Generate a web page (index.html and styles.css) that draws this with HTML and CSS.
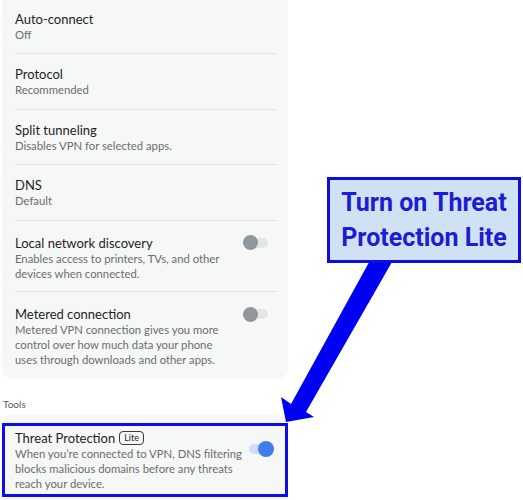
FILE: index.html
```html
<!DOCTYPE html>
<html>
<head>
<meta charset="utf-8">
<link rel="stylesheet" href="styles.css">
</head>
<body>
<div class="page">
  <div class="card card-top">
    <div class="row row-first">
      <div class="text">
        <div class="title">Auto-connect</div>
        <div class="sub">Off</div>
      </div>
    </div>
    <div class="row">
      <div class="text">
        <div class="title">Protocol</div>
        <div class="sub">Recommended</div>
      </div>
    </div>
    <div class="row">
      <div class="text">
        <div class="title">Split tunneling</div>
        <div class="sub">Disables VPN for selected apps.</div>
      </div>
    </div>
    <div class="row">
      <div class="text">
        <div class="title">DNS</div>
        <div class="sub">Default</div>
      </div>
    </div>
    <div class="row row-toggle">
      <div class="text">
        <div class="title">Local network discovery</div>
        <div class="sub">Enables access to printers, TVs, and other<br>devices when connected.</div>
      </div>
      <div class="switch switch-off"><span class="knob"></span></div>
    </div>
    <div class="row row-toggle row-last">
      <div class="text">
        <div class="title">Metered connection</div>
        <div class="sub">Metered VPN connection gives you more<br>control over how much data your phone<br>uses through downloads and other apps.</div>
      </div>
      <div class="switch switch-off"><span class="knob"></span></div>
    </div>
  </div>

  <div class="section-label">Tools</div>

  <div class="card card-tools">
    <div class="row row-threat">
      <div class="text">
        <div class="title">Threat Protection <span class="badge">Lite</span></div>
        <div class="sub">When you’re connected to VPN, DNS filtering<br>blocks malicious domains before any threats<br>reach your device.</div>
      </div>
      <div class="switch switch-on"><span class="knob"></span></div>
    </div>
    <div class="highlight"></div>
  </div>

  <svg class="arrow" width="523" height="500" viewBox="0 0 523 500" xmlns="http://www.w3.org/2000/svg">
    <polygon points="373,255 396,255 306,412 314,417 286,422 281,397 291,404" fill="#0000f2"/>
  </svg>

  <div class="callout">Turn on Threat<br>Protection Lite</div>
</div>
</body>
</html>
```

FILE: styles.css
```css
html, body {
  margin: 0;
  padding: 0;
  background: #ffffff;
}

.page {
  position: relative;
  width: 523px;
  height: 500px;
  overflow: hidden;
  font-family: Lato, "Noto Sans", sans-serif;
}

.card {
  margin-left: 2px;
  width: 286px;
  background: #f6f7f7;
}

.card-top {
  border-radius: 0 0 8px 8px;
}

.row {
  display: flex;
  align-items: flex-start;
  margin: 0 11px 0 13px;
  padding: 12px 0 11.5px;
  border-bottom: 1px solid #e2e3e3;
}

.row-first {
  padding-top: 10.5px;
}

.row-toggle {
  padding-top: 14px;
  padding-bottom: 10.5px;
}

.row-last {
  border-bottom: none;
  padding-bottom: 11px;
}

.text {
  flex: 1;
  white-space: nowrap;
}

.title {
  font-size: 13px;
  line-height: 16px;
  color: #1e1f20;
  display: flex;
  align-items: center;
}

.sub {
  font-size: 11.3px;
  line-height: 15px;
  color: #6a6d70;
}

.switch {
  flex: none;
  width: 25px;
  height: 10px;
  border-radius: 5px;
  display: flex;
  align-items: center;
  margin-top: 3px;
}

.knob {
  flex: none;
  width: 15px;
  height: 15px;
  border-radius: 50%;
}

.switch-off {
  background: #e3e5e6;
  margin-right: 9px;
  justify-content: flex-start;
}

.switch-off .knob {
  background: #8e979c;
}

.switch-on {
  background: #cfdcf3;
  justify-content: flex-end;
  margin-top: 14px;
  margin-right: 3px;
}

.switch-on .knob {
  width: 16px;
  height: 16px;
  background: #3d7ee8;
}

.section-label {
  margin: 20px 0 5px 3px;
  font-size: 10px;
  line-height: 12px;
  color: #555a5e;
}

.card-tools {
  position: relative;
  border-radius: 8px 8px 0 0;
  height: 100px;
}

.row-threat {
  padding-top: 15px;
  border-bottom: none;
}

.badge {
  display: inline-block;
  margin-left: 4px;
  padding: 1px 4px;
  border: 1px solid #3a3c3e;
  border-radius: 4px;
  font-size: 9px;
  line-height: 10px;
  color: #2a2b2c;
}

.highlight {
  position: absolute;
  left: 0;
  top: 8px;
  width: 280px;
  height: 68px;
  border: 3px solid #0e0ee0;
}

.arrow {
  position: absolute;
  left: 0;
  top: 0;
}

.callout {
  position: absolute;
  left: 327px;
  top: 177px;
  width: 188px;
  height: 80px;
  border: 3px solid #0e0ee0;
  background: #cfe1f3;
  display: flex;
  align-items: center;
  justify-content: center;
  text-align: center;
  font-family: Roboto, "Liberation Sans", sans-serif;
  font-weight: 700;
  font-size: 25px;
  line-height: 35px;
  color: #1c1cd2;
}
```
